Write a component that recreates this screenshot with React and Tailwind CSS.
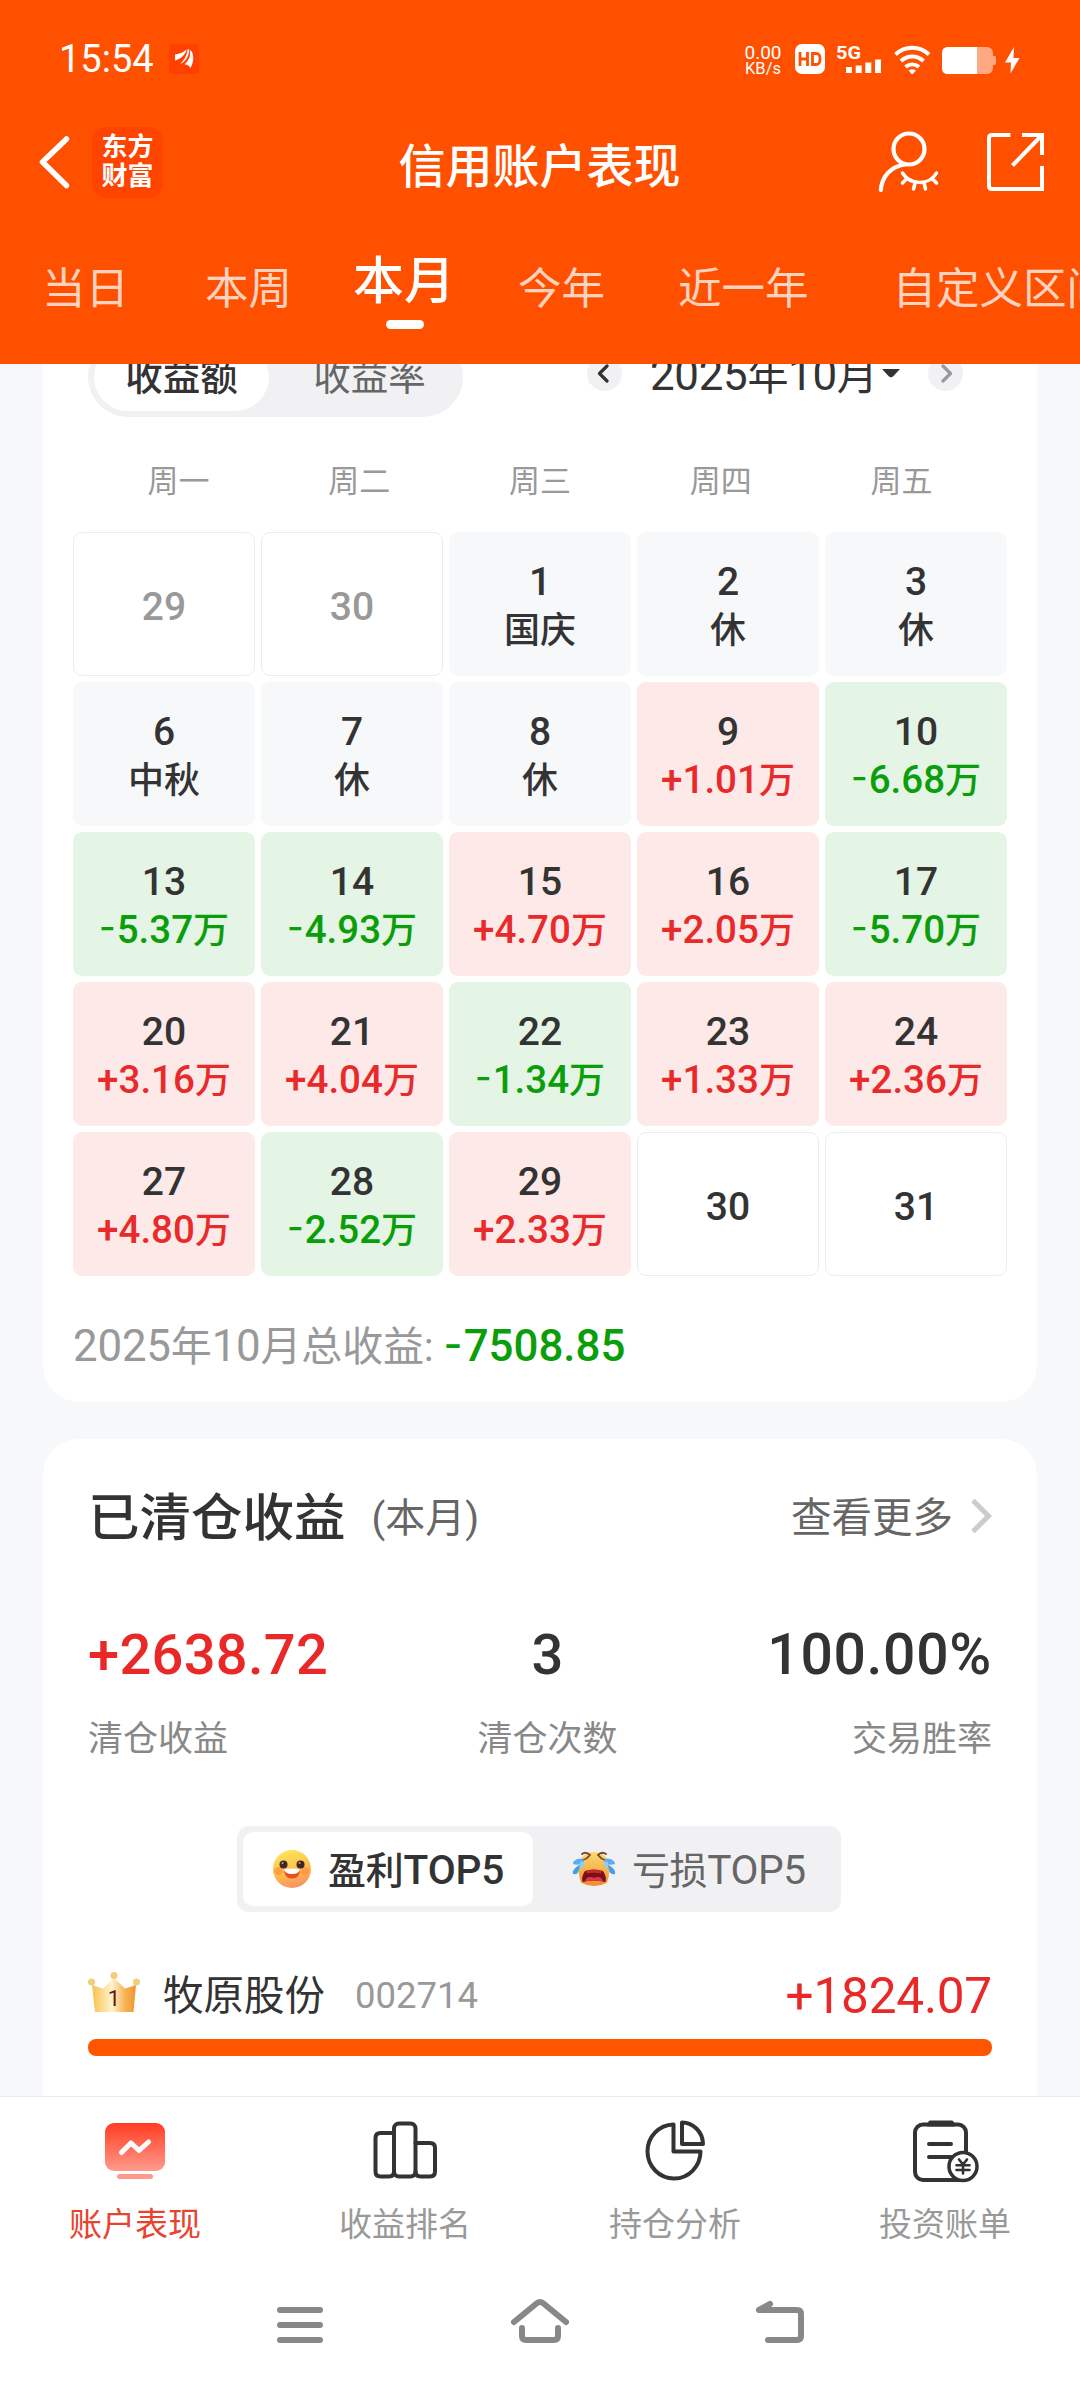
import React from "react";

const dayCells = [
  ["29", "", "out"], ["30", "", "out"], ["1", "国庆", "rest"], ["2", "休", "rest"], ["3", "休", "rest"],
  ["6", "中秋", "rest"], ["7", "休", "rest"], ["8", "休", "rest"], ["9", "+1.01万", "up"], ["10", "-6.68万", "down"],
  ["13", "-5.37万", "down"], ["14", "-4.93万", "down"], ["15", "+4.70万", "up"], ["16", "+2.05万", "up"], ["17", "-5.70万", "down"],
  ["20", "+3.16万", "up"], ["21", "+4.04万", "up"], ["22", "-1.34万", "down"], ["23", "+1.33万", "up"], ["24", "+2.36万", "up"],
  ["27", "+4.80万", "up"], ["28", "-2.52万", "down"], ["29", "+2.33万", "up"], ["30", "", "future"], ["31", "", "future"],
];

const cellBox = {
  out: "border border-[#ececee] bg-white text-[#999]",
  future: "border border-[#ececee] bg-white text-[#333]",
  rest: "bg-[#f7f8fa] text-[#333]",
  up: "bg-[#fde9e8] text-[#333]",
  down: "bg-[#e4f4e5] text-[#333]",
};

const valueColor = { rest: "text-[#333]", up: "text-[#e92a2a]", down: "text-[#0a9e0a]" };

/* Latin runs are set a little larger than the Chinese ones, with a wide minus sign. */
function T({ children }) {
  return String(children)
    .split(/([0-9A-Za-z.%+]+|-)/)
    .filter(Boolean)
    .map((run, i) => {
      if (run === "-") {
        return (
          <span key={i} className="relative -top-[0.06em] mr-[0.03em] font-['Inter'] text-[1em] leading-none">-</span>
        );
      }
      return /^[0-9A-Za-z.%+]/.test(run) ? (
        <span key={i} className="text-[1.07em] leading-none">{run}</span>
      ) : (
        <span key={i}>{run}</span>
      );
    });
}

function StatusBar() {
  return (
    <div className="flex h-[118px] items-center pl-[59px] text-white">
      <span className="w-[97px] text-[38px] leading-none whitespace-nowrap">15:54</span>
      <svg className="ml-[13px]" width="30" height="30" viewBox="0 0 30 30">
        <rect width="30" height="30" rx="2" fill="#ff4100" />
        <path d="M6 10.500C11 10 15 8 17.500 5.500C17 10 12 15 6 16.500Z" fill="#fff" />
        <path d="M18.300 5.500C18.800 11 14 17.500 11 20C14 19.500 20 14 20.300 5.500Z" fill="#fff" />
        <path d="M11.500 20.500C17.500 19 21.500 12 21.200 6C25 9 25.500 17 21.500 24C20 21.500 18 20 15.500 20.500C19.500 17 21.500 12 21.200 8C21 13 16 20 11.500 20.500Z" fill="#fff" />
      </svg>
      <div className="ml-[544px] flex w-[40px] flex-col items-center pt-[1px] whitespace-nowrap">
        <span className="text-[19px] leading-[17px]">0.00</span>
        <span className="text-[16.5px] leading-[15px]">KB/s</span>
      </div>
      <svg className="ml-[11px]" width="230" height="30" viewBox="794 44 230 30">
        <rect x="795" y="44" width="30" height="30" rx="7" fill="#fff" />
        <path d="M800 52V66M807.500 52V66M800 59H807.500M812.500 53.500H816C819 53.500 820 55 820 59C820 63 819 64.500 816 64.500H812.500Z" fill="none" stroke="#ff5000" strokeWidth="2.800" />
        <text x="836" y="59" fontSize="19" fontWeight="700" fontFamily="Roboto" textLength="25" lengthAdjust="spacingAndGlyphs" fill="#fff">5G</text>
        <path d="M849 67V73M858.700 65.500V73M868.300 62.500V73M878 59.500V73" stroke="#fff" strokeWidth="6" />
        <g fill="none" stroke="#fff" strokeWidth="4">
          <path d="M895.500 54.500C905 45.500 919.500 45.500 929 54.500" />
          <path d="M901 61C907.500 55 917 55 923.500 61" />
          <path d="M905.500 67C909.500 63.500 915 63.500 919 67" />
        </g>
        <path d="M908.500 70.500Q912.200 68 916 70.500L912.200 74.500Z" fill="#fff" />
        <rect x="942" y="47" width="51" height="27" rx="6" fill="#ffa884" />
        <path d="M993 56H994.500Q996 56 996 58V63Q996 65 994.500 65H993Z" fill="#ffa884" />
        <path d="M948 47H977V74H948Q942 74 942 68V53Q942 47 948 47Z" fill="#fff" />
        <path d="M1014 47L1005 62.500H1011L1010.500 73.500L1019.500 58H1013.500Z" fill="#fff" />
      </svg>
    </div>
  );
}

function TitleBar() {
  return (
    <div className="flex h-[88px] items-center justify-between pr-[35px] pl-[38px] text-white">
      <div className="flex w-[336px] items-center gap-[22px]">
        <svg width="32" height="56" viewBox="38 135 32 56" fill="none" stroke="#fff" strokeWidth="5.500" strokeLinecap="round" strokeLinejoin="round">
          <path d="M66.500 140L42.500 163L66.500 186.500" />
        </svg>
        <div className="flex size-[71px] flex-col items-center justify-center rounded-[14px] bg-[#ff4400] text-[26px] leading-[29px] font-bold">
          <span>东方</span>
          <span>财富</span>
        </div>
      </div>
      <h1 className="pt-[8px] text-[47px] leading-none font-medium whitespace-nowrap">信用账户表现</h1>
      <div className="flex w-[340px] justify-end gap-[47px]">
        <svg width="62" height="64" viewBox="878 130 62 64" fill="none" stroke="#fff" strokeWidth="4.200" strokeLinecap="round">
          <circle cx="909" cy="149" r="15.500" />
          <path d="M880.800 190C882 177 890 166.500 905 164.500" />
          <path d="M902.500 173C910 185 929 186 936.500 173" strokeWidth="3.500" />
          <path d="M906.500 179L902.500 183M915 183L913.500 189M924 183L925.500 189M932.500 179L936.500 183" strokeWidth="3.500" />
        </svg>
        <svg width="58" height="64" viewBox="987 130 58 64" fill="none" stroke="#fff" strokeWidth="4">
          <path d="M1010.500 135H992Q989 135 989 138V186Q989 189 992 189H1042V166" />
          <path d="M1022 135H1042V155M1042 135L1012.500 165.500" />
        </svg>
      </div>
    </div>
  );
}

function RangeTabs() {
  return (
    <div className="flex h-[92px] items-center text-[43.500px] leading-[60px] whitespace-nowrap text-white/75">
      <span className="ml-[42px]">当日</span>
      <span className="ml-[76px]">本周</span>
      <div className="ml-[61px] flex w-[102px] flex-col items-center font-medium text-white">
        <span className="text-[51px] leading-[60px]">本月</span>
        <span className="mt-[8px] ml-[2px] h-[9px] w-[38px] rounded-full bg-white" />
      </div>
      <span className="ml-[63px]">今年</span>
      <span className="ml-[73px]">近一年</span>
      <span className="ml-[84px]">自定义区间</span>
    </div>
  );
}

function RoundArrow({ d, color }) {
  return (
    <span className="flex size-[35px] items-center justify-center rounded-full bg-[#f1f1f3]">
      <svg width="35" height="35" viewBox="0 0 35 35" fill="none" stroke={color} strokeWidth="3.200" strokeLinecap="round" strokeLinejoin="round">
        <path d={d} />
      </svg>
    </span>
  );
}

function CalendarCard() {
  return (
    <section className="mx-[43px] -mt-[60px] rounded-[36px] bg-white px-[30px] pt-[33px] pb-[25px]">
      <div className="flex h-[80px] items-center pl-[15px]">
        <div className="flex h-[80px] w-[375px] items-center justify-between rounded-full bg-[#f1f1f3] p-[6px] text-[37.500px] leading-[68px]">
          <span className="h-[68px] w-[175px] rounded-full bg-white text-center font-medium text-[#333]">收益额</span>
          <span className="h-[68px] w-[175px] text-center text-[#666]">收益率</span>
        </div>
        <div className="ml-[124px] flex w-[376px] items-center pb-[8px]">
          <RoundArrow d="M20 10L12.500 17.500L20 25" color="#333" />
          <span className="ml-[28px] w-[222px] pt-[6px] text-[41px] leading-[60px] tracking-[-0.3px] whitespace-nowrap text-[#333]">
            <T>2025年10月</T>
          </span>
          <svg className="ml-[10px]" width="18" height="9" viewBox="0 0 18 9">
            <path d="M0 0H18L11.500 7Q9 9.500 6.500 7Z" fill="#333" />
          </svg>
          <span className="ml-[28px]">
            <RoundArrow d="M15 10L22.500 17.500L15 25" color="#999" />
          </span>
        </div>
      </div>
      <div className="mx-[15px] mt-[35px] grid h-[60px] grid-cols-5 text-center text-[31px] leading-[60px] text-[#999]">
        {["周一", "周二", "周三", "周四", "周五"].map((d) => (
          <span key={d}>{d}</span>
        ))}
      </div>
      <div className="mt-[20px] grid grid-cols-5 gap-[6px]">
        {dayCells.map(([day, note, kind], i) => (
          <div key={i} className={`flex h-[144px] flex-col items-center justify-center rounded-[9px] pt-[6px] font-medium ${cellBox[kind]}`}>
            <span className="text-[39px] leading-[47px]">{day}</span>
            {note && (
              <span className={`text-[36px] leading-[50px] whitespace-nowrap ${valueColor[kind]}`}>
                <T>{note}</T>
              </span>
            )}
          </div>
        ))}
      </div>
      <p className="mt-[41px] h-[60px] text-[41px] leading-[60px] tracking-[-0.2px] whitespace-nowrap text-[#999]">
        <T>2025年10月总收益:</T>
        <span className="ml-[10px] font-medium tracking-normal text-[#0a9e0a]">
          <T>-7508.85</T>
        </span>
      </p>
    </section>
  );
}

function HappyFace() {
  return (
    <svg width="40" height="40" viewBox="0 0 40 40">
      <defs>
        <linearGradient id="happyFill" x1="0.300" y1="0" x2="0.600" y2="1">
          <stop offset="0" stopColor="#ffe65a" />
          <stop offset="0.550" stopColor="#fcbf4a" />
          <stop offset="1" stopColor="#fb8f62" />
        </linearGradient>
      </defs>
      <circle cx="20" cy="20" r="19" fill="url(#happyFill)" />
      <ellipse cx="6.500" cy="22" rx="4.500" ry="4" fill="#ff8a3c" opacity="0.600" />
      <ellipse cx="33" cy="22" rx="4.500" ry="4" fill="#ff8a3c" opacity="0.600" />
      <circle cx="11.500" cy="15.500" r="4" fill="#40242a" />
      <circle cx="28.500" cy="15.500" r="4" fill="#40242a" />
      <circle cx="10.500" cy="14" r="1.100" fill="#b99" />
      <circle cx="27.500" cy="14" r="1.100" fill="#b99" />
      <path d="M12 20.500Q20 22.500 28 20.500Q28 29.500 20 29.500Q12 29.500 12 20.500Z" fill="#e8501f" />
      <path d="M12 20.300Q20 18.500 28 20.300Q27.500 25 20 25Q12.500 25 12 20.300Z" fill="#fff" />
    </svg>
  );
}

function CryingFace() {
  return (
    <svg width="44" height="36" viewBox="0 0 44 36">
      <defs>
        <linearGradient id="cryFill" x1="0" y1="0" x2="0" y2="1">
          <stop offset="0" stopColor="#fbdc72" />
          <stop offset="0.600" stopColor="#f6ae45" />
          <stop offset="1" stopColor="#ee8a30" />
        </linearGradient>
      </defs>
      <path d="M22 1C32 1 37.500 8 37.500 17C37.500 24 36 29 34.500 32Q22 38 9.500 32C8 29 6.500 24 6.500 17C6.500 8 12 1 22 1Z" fill="url(#cryFill)" />
      <path d="M10 3Q14 0 18 4Q15 8 11 9M34 3Q30 0 26 4Q29 8 33 9" fill="none" stroke="#7a4436" strokeWidth="1.800" strokeLinecap="round" />
      <path d="M11 8C6 7 1 9 1 13Q8 15 12 11ZM33 8C38 7 43 9 43 13Q36 15 32 11Z" fill="#58aef5" />
      <path d="M8 14C3 16 0 20 1 23Q6 24 7 19ZM36 14C41 16 44 20 43 23Q38 24 37 19Z" fill="#3f9ff0" />
      <path d="M8 11Q12 9 12 14Q11 18 8 17ZM36 11Q32 9 32 14Q33 18 36 17Z" fill="#8fcdf8" />
      <path d="M13 20Q22 17 31 20Q35 26 33.500 31Q22 28 10.500 31Q9 26 13 20Z" fill="#7c1019" />
      <path d="M14 20Q22 17.500 30 20L29 22.500Q22 21 15 22.500Z" fill="#c22a32" />
      <path d="M13 30.500Q14 25.500 19 26Q22 27.500 25 26Q30 25.500 31 30.500Q22 28.500 13 30.500Z" fill="#e0364c" />
    </svg>
  );
}

function Crown() {
  return (
    <svg width="52" height="40" viewBox="0 0 52 40">
      <defs>
        <linearGradient id="crownFill" x1="0" y1="0.500" x2="1" y2="0.500">
          <stop offset="0" stopColor="#f9c04a" />
          <stop offset="0.450" stopColor="#fff3cf" />
          <stop offset="0.750" stopColor="#f9b352" />
          <stop offset="1" stopColor="#ef9334" />
        </linearGradient>
      </defs>
      <path d="M4 13L15 16.500L26 6L37 16.500L48 13L45.500 40H7Z" fill="url(#crownFill)" />
      <circle cx="3.500" cy="10" r="3.500" fill="#f3cd78" />
      <circle cx="26" cy="3.500" r="3.500" fill="#f3cd78" />
      <circle cx="48.500" cy="10" r="3.500" fill="#f3cd78" />
      <text x="26" y="33.500" textAnchor="middle" fontSize="22" fontFamily="Roboto" fill="#5b1a0d">1</text>
    </svg>
  );
}

function ClosedPositionsCard() {
  return (
    <section className="mx-[43px] mt-[37px] h-[700px] rounded-t-[36px] bg-white px-[45px] pt-[50px]">
      <div className="flex h-[60px] items-center whitespace-nowrap">
        <h2 className="text-[51.500px] leading-[60px] font-medium text-[#333]">已清仓收益</h2>
        <span className="ml-[26px] text-[40px] leading-[60px] text-[#666]">(本月)</span>
        <span className="mb-[2px] ml-auto text-[40.500px] leading-[60px] text-[#666]">查看更多</span>
        <svg className="mr-[-3px] mb-[6px] ml-[17px]" width="25" height="36" viewBox="0 0 25 36" fill="none" stroke="#ccc" strokeWidth="5">
          <path d="M3 2.500L18.500 18L3 33.500" />
        </svg>
      </div>
      <div className="mt-[71px] flex justify-between whitespace-nowrap">
        <div className="flex w-[300px] flex-col items-start gap-[25px]">
          <span className="text-[56px] leading-[70px] font-medium tracking-[0.3px] text-[#e92828]">+2638.72</span>
          <span className="text-[35px] leading-[50px] text-[#888]">清仓收益</span>
        </div>
        <div className="flex flex-col items-center gap-[25px] pl-[15px]">
          <span className="text-[56px] leading-[70px] font-medium text-[#333]">3</span>
          <span className="text-[35px] leading-[50px] text-[#888]">清仓次数</span>
        </div>
        <div className="flex w-[300px] flex-col items-end gap-[25px]">
          <span className="text-[57px] leading-[70px] font-medium tracking-[0.7px] text-[#333]">100.00%</span>
          <span className="text-[35px] leading-[50px] text-[#888]">交易胜率</span>
        </div>
      </div>
      <div className="mt-[61px] ml-[149px] flex h-[86px] w-[604px] items-center rounded-[12px] bg-[#f1f1f3] p-[6px] text-[38px] leading-[74px] whitespace-nowrap">
        <div className="flex h-[74px] w-[290px] items-center rounded-[10px] bg-white pl-[29px] font-medium text-[#333]">
          <HappyFace />
          <span className="ml-[16px] pt-[4px] tracking-[-0.2px]"><T>盈利TOP5</T></span>
        </div>
        <div className="flex h-[74px] items-center pl-[39px] text-[#666]">
          <CryingFace />
          <span className="ml-[16px] pt-[4px] tracking-[-0.4px]"><T>亏损TOP5</T></span>
        </div>
      </div>
      <div className="mt-[54px] flex h-[60px] items-center leading-[60px] whitespace-nowrap">
        <span className="mb-[8px]"><Crown /></span>
        <span className="ml-[23px] text-[40.500px] text-[#333]">牧原股份</span>
        <span className="ml-[30px] text-[36.500px] text-[#999]">002714</span>
        <span className="ml-auto text-[49.500px] tracking-[-0.2px] text-[#e92828]">+1824.07</span>
      </div>
      <div className="mt-[13px] h-[17px] rounded-[8px] bg-[#ff5500]" />
    </section>
  );
}

function NavItem({ label, active, children }) {
  return (
    <div className="flex flex-1 flex-col items-center pt-[21px]">
      <svg width="70" height="68" viewBox="0 0 70 68" fill="none" stroke="#333" strokeWidth="4" strokeLinejoin="round" strokeLinecap="round">
        {children}
      </svg>
      <span className={`mt-[14px] text-[33px] leading-[50px] ${active ? "text-[#e8432e]" : "text-[#999]"}`}>{label}</span>
    </div>
  );
}

function BottomNav() {
  return (
    <nav className="flex h-[182px] border-t border-[#ebebeb] bg-white">
      <NavItem label="账户表现" active>
        <defs>
          <linearGradient id="screenFill" x1="0" y1="0" x2="0" y2="1">
            <stop offset="0" stopColor="#ff3d22" />
            <stop offset="1" stopColor="#ff9a8c" />
          </linearGradient>
        </defs>
        <rect x="5" y="5" width="60" height="48" rx="9" fill="url(#screenFill)" stroke="none" />
        <path d="M21.500 34.500L31 25L39 32.500L48.500 24" stroke="#fff" strokeWidth="5" />
        <rect x="17" y="56" width="36" height="5" rx="2.500" fill="#ff998b" stroke="none" />
      </NavItem>
      <NavItem label="收益排名">
        <path d="M24 15H10.500Q5.500 15 5.500 20V53.500Q5.500 58.500 10.500 58.500H19Q24 58.500 24 53.500" />
        <rect x="24" y="5.500" width="21.500" height="53" rx="5" />
        <path d="M45.500 25H60Q65 25 65 30V53.500Q65 58.500 60 58.500H50.500Q45.500 58.500 45.500 53.500" />
      </NavItem>
      <NavItem label="持仓分析">
        <path d="M33.500 6.500A26.500 27 0 1 0 60.500 33.500H33.500Z" />
        <path d="M42 4.500A21 22 0 0 1 63 26H42Z" />
      </NavItem>
      <NavItem label="投资账单">
        <rect x="5" y="6.500" width="51" height="55.500" rx="8" />
        <path d="M20 4H42L44 7H18Z" fill="#333" strokeWidth="3" />
        <path d="M19 26H41M19 39H41" />
        <circle cx="53" cy="48.500" r="14" fill="#fff" strokeWidth="3.500" />
        <path d="M49 41.500L53 46.500L57 41.500M46.500 47.200H59.500M46.500 52H59.500M53 47V55.500" strokeWidth="2.600" />
      </NavItem>
    </nav>
  );
}

function SystemBar() {
  return (
    <div className="flex h-[110px] items-start justify-center gap-[180px] bg-white pt-[15px]">
      <svg width="60" height="60" viewBox="270 2293 60 60" fill="none" stroke="#888" strokeWidth="6" strokeLinecap="round">
        <path d="M280 2310H320M280 2325H320M280 2340H320" />
      </svg>
      <svg width="60" height="60" viewBox="510 2293 60 60" fill="none" stroke="#888" strokeWidth="6" strokeLinecap="round" strokeLinejoin="round">
        <path d="M514 2322L536.500 2303.500Q540 2300.500 543.500 2303.500L566 2322" />
        <path d="M522 2328V2336Q522 2340 526 2340H554Q558 2340 558 2336V2328" />
      </svg>
      <svg width="60" height="60" viewBox="750 2293 60 60" fill="none" stroke="#888" strokeWidth="6" strokeLinecap="round" strokeLinejoin="round">
        <path d="M770 2304L759 2310H797Q801 2310 801 2314V2336Q801 2340 797 2340H768" />
      </svg>
    </div>
  );
}

export default function App() {
  return (
    <div className="flex h-[2388px] w-[1080px] flex-col overflow-hidden bg-[#f7f8fa] font-['Roboto','Noto_Sans_CJK_SC',sans-serif]">
      <header className="h-[364px] shrink-0 overflow-hidden bg-[#ff5000]">
        <StatusBar />
        <TitleBar />
        <div className="pt-[38px]">
          <RangeTabs />
        </div>
      </header>
      <main className="h-[1732px] shrink-0 overflow-hidden">
        <CalendarCard />
        <ClosedPositionsCard />
      </main>
      <BottomNav />
      <SystemBar />
    </div>
  );
}
